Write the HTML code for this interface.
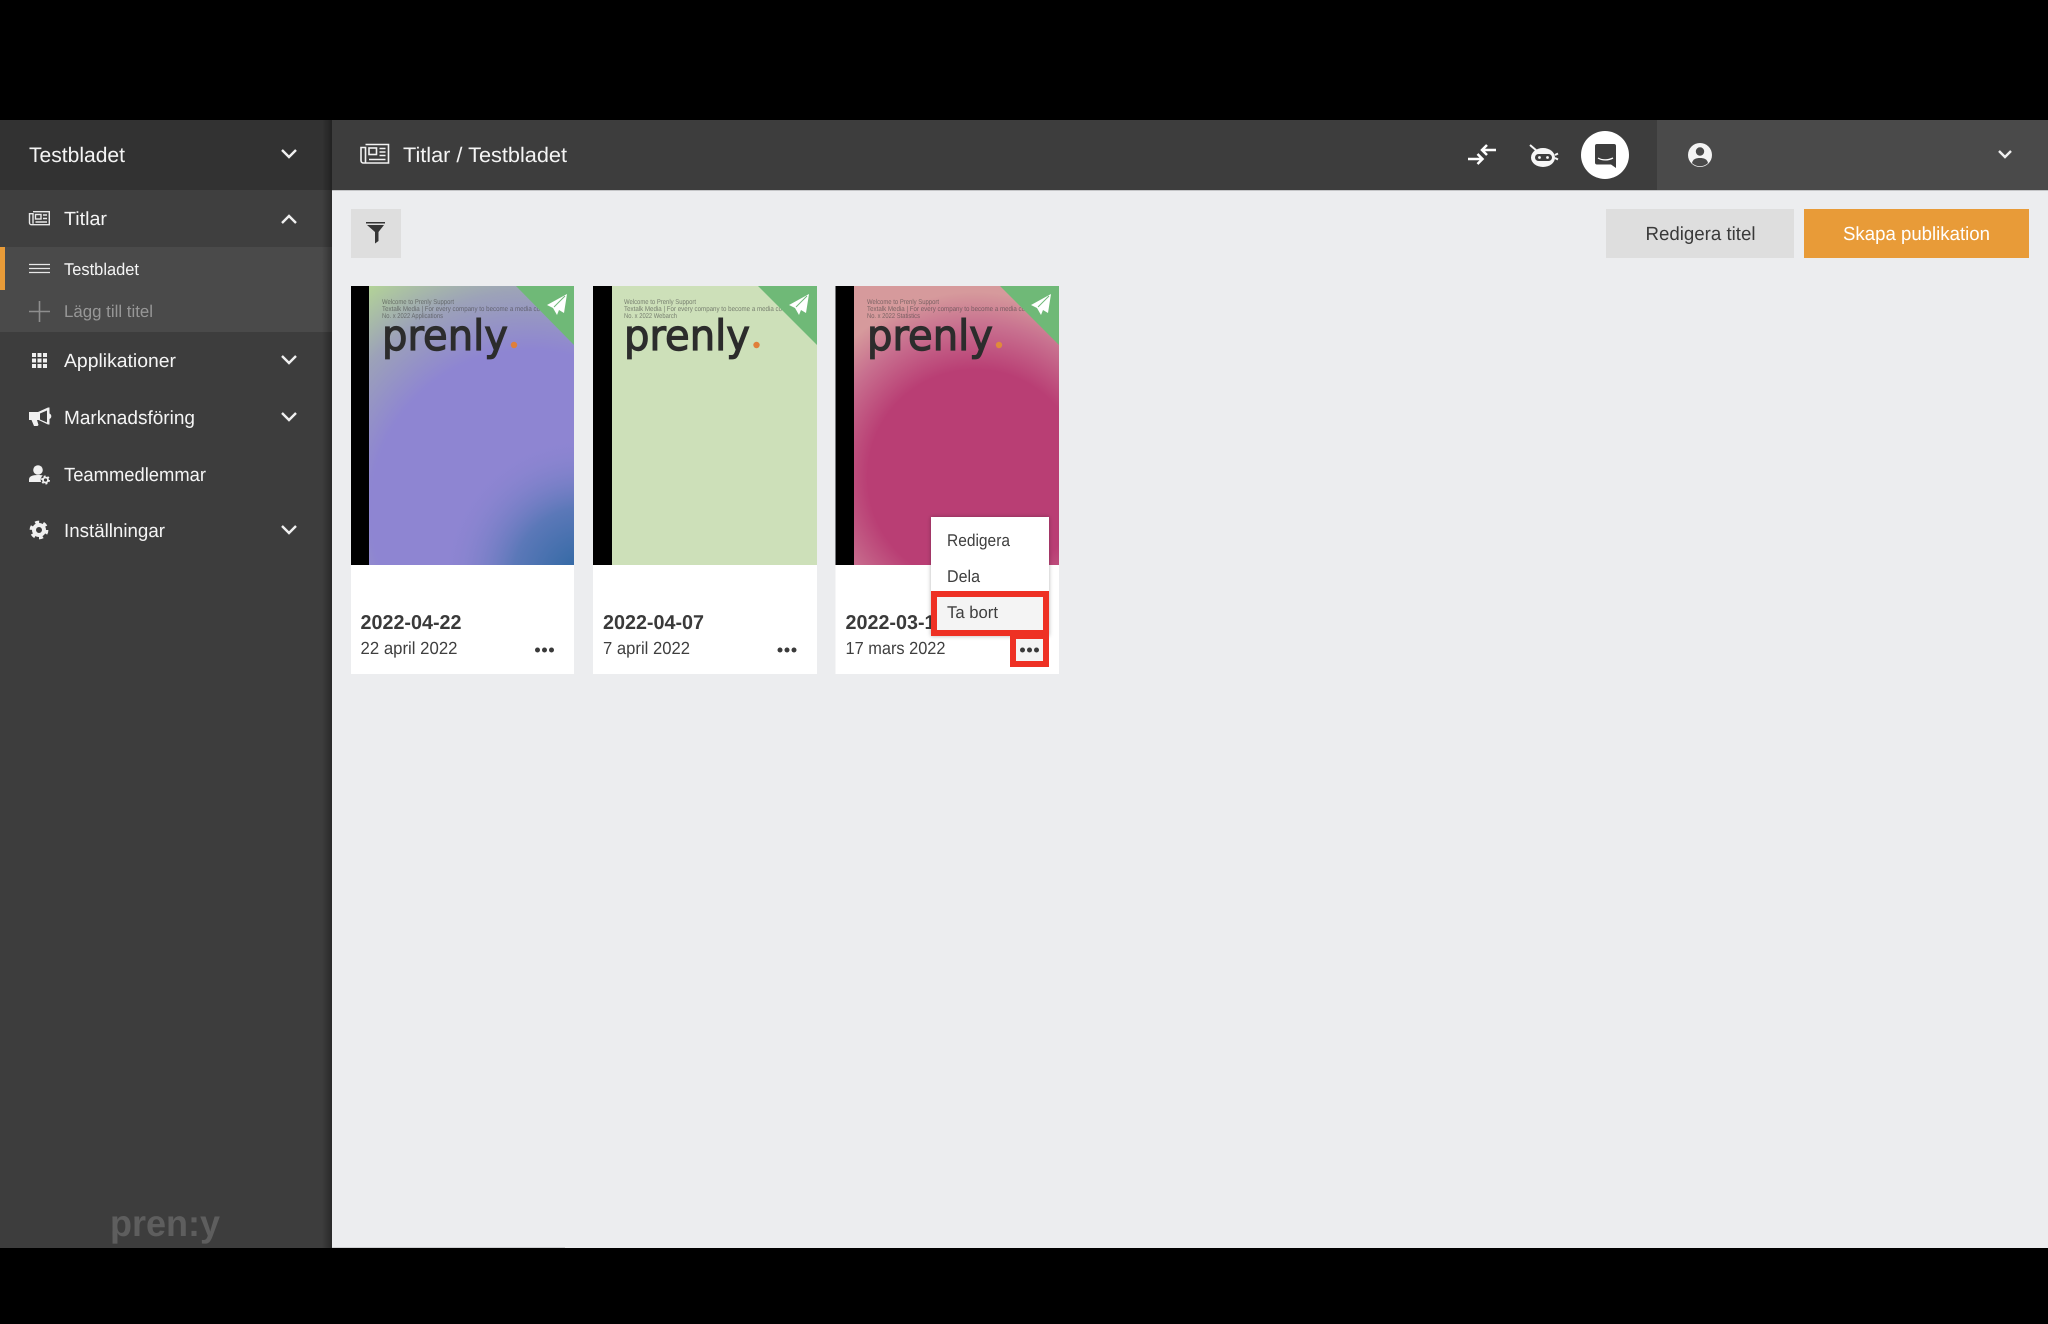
<!DOCTYPE html>
<html lang="sv">
<head>
<meta charset="utf-8">
<title>Titlar / Testbladet</title>
<style>
html,body{margin:0;padding:0;background:#000;width:2048px;height:1324px;overflow:hidden}
svg{display:block}
text{font-family:"Liberation Sans",sans-serif;text-rendering:geometricPrecision}
.w{fill:#f4f4f4}
.d{fill:#3c3c3c}
.sm{font-size:7px;fill:#3f3f3f;opacity:.62}
.lg{font-family:"DejaVu Sans",sans-serif;font-size:42px;fill:#2c2c2c;stroke:#2c2c2c;stroke-width:1.2}
.bd{font-size:20px;font-weight:bold;fill:#3a3a3a}
.sb{font-size:17.5px;fill:#3f3f3f}
.chev{fill:none;stroke:#f0f0f0;stroke-width:2.4}
</style>
</head>
<body>
<svg width="2048" height="1324" viewBox="0 0 2048 1324" xmlns="http://www.w3.org/2000/svg">
<defs>
<linearGradient id="edge" x1="0" x2="1" y1="0" y2="0"><stop offset="0" stop-color="#000" stop-opacity="0"/><stop offset="1" stop-color="#000" stop-opacity=".32"/></linearGradient>
<radialGradient id="g1" gradientUnits="userSpaceOnUse" cx="530" cy="510" r="280"><stop offset="0" stop-color="#8e85d2"/><stop offset=".57" stop-color="#8e85d2"/><stop offset=".78" stop-color="#9ca2b8"/><stop offset="1" stop-color="#b5d795"/></radialGradient>
<radialGradient id="b1" gradientUnits="userSpaceOnUse" cx="585" cy="580" r="145"><stop offset="0" stop-color="#2a66a0"/><stop offset=".5" stop-color="#5b78b8"/><stop offset="1" stop-color="#8e85d2" stop-opacity="0"/></radialGradient>
<radialGradient id="g3" gradientUnits="userSpaceOnUse" cx="975" cy="477" r="185"><stop offset="0" stop-color="#b93e74"/><stop offset=".58" stop-color="#b93e74"/><stop offset=".82" stop-color="#c8708f"/><stop offset="1" stop-color="#d69a9c"/></radialGradient>
<filter id="sh" x="-10%" y="-10%" width="120%" height="120%"><feDropShadow dx="0" dy="0" stdDeviation="2" flood-color="#000" flood-opacity=".3"/></filter>
<g id="plane"><path d="M20 0 L0 11 L6 14 L10 21 L12 16 L17 19 Z" fill="#fff"/><path d="M18 2 L7 13" stroke="#6fb977" stroke-width="1"/></g>
</defs>

<rect width="2048" height="1324" fill="#000"/>
<rect x="332" y="120" width="1716" height="1128" fill="#ecedef"/>

<!-- sidebar -->
<rect x="0" y="120" width="332" height="1128" fill="#3d3d3d"/>
<rect x="0" y="120" width="332" height="70" fill="#323232"/>
<rect x="0" y="190" width="332" height="57" fill="#3f3f3f"/>
<rect x="0" y="247" width="332" height="85" fill="#4a4a4a"/>
<rect x="0" y="247" width="5" height="43" fill="#e89b38"/>
<rect x="322" y="120" width="10" height="1128" fill="url(#edge)"/>

<text x="29" y="162" font-size="21" class="w" textLength="96" lengthAdjust="spacingAndGlyphs">Testbladet</text>
<path class="chev" d="M282 150l7 7 7-7"/>

<g fill="none" stroke="#e8e8e8" stroke-width="1.4">
<path d="M33 211.700h16.300v13H31.500a2 2 0 0 1-2-2v-9h3.500v10"/>
<rect x="35.500" y="214.500" width="5.500" height="4.500"/>
<path d="M43 215h4M43 218.500h4M35.500 222h11.500"/>
</g>
<text x="64" y="225" font-size="19" class="w" textLength="43" lengthAdjust="spacingAndGlyphs">Titlar</text>
<path class="chev" d="M282 223l7-7 7 7"/>

<path d="M29 264.500h21M29 268.500h21M29 272.500h21" stroke="#e8e8e8" stroke-width="1.300"/>
<text x="64" y="275" font-size="17" class="w" textLength="75" lengthAdjust="spacingAndGlyphs">Testbladet</text>

<path d="M39.500 301v21M29 311.500h21" stroke="#8e8e8e" stroke-width="1.600"/>
<text x="64" y="317" font-size="17" fill="#979797" textLength="89" lengthAdjust="spacingAndGlyphs">Lägg till titel</text>

<g fill="#f0f0f0">
<rect x="32" y="353" width="4" height="4"/><rect x="37.500" y="353" width="4" height="4"/><rect x="43" y="353" width="4" height="4"/>
<rect x="32" y="358.500" width="4" height="4"/><rect x="37.500" y="358.500" width="4" height="4"/><rect x="43" y="358.500" width="4" height="4"/>
<rect x="32" y="364" width="4" height="4"/><rect x="37.500" y="364" width="4" height="4"/><rect x="43" y="364" width="4" height="4"/>
</g>
<text x="64" y="367" font-size="19" class="w" textLength="112" lengthAdjust="spacingAndGlyphs">Applikationer</text>
<path class="chev" d="M282 356l7 7 7-7"/>

<path fill="#f0f0f0" fill-rule="evenodd" d="M29 412h9l10-4.500h1.500v6a3 3 0 0 1 0 5.500v5.500H48l-9.500-4.500h-1.500l1.500 5-1 1h-3.500l-2.500-6H29z M40 413.500v6l7 3v-12z"/>
<text x="64" y="424" font-size="19" class="w" textLength="131" lengthAdjust="spacingAndGlyphs">Marknadsföring</text>
<path class="chev" d="M282 413l7 7 7-7"/>

<circle cx="38" cy="470" r="4.800" fill="#f0f0f0"/>
<path d="M29 482v-2.500c0-3 3-4.500 9-4.500 2 0 3.600.2 4.800.5-2 1.500-2.600 4-1.600 6.500z" fill="#f0f0f0"/>
<circle cx="45.500" cy="480" r="2.500" fill="none" stroke="#f0f0f0" stroke-width="1.800"/>
<circle cx="45.500" cy="480" r="3.800" fill="none" stroke="#f0f0f0" stroke-width="1.400" stroke-dasharray="2 1.980"/>
<text x="64" y="481" font-size="19" class="w" textLength="142" lengthAdjust="spacingAndGlyphs">Teammedlemmar</text>

<circle cx="39" cy="530" r="5" fill="none" stroke="#f0f0f0" stroke-width="4"/>
<circle cx="39" cy="530" r="8" fill="none" stroke="#f0f0f0" stroke-width="2.800" stroke-dasharray="4.100 4.280"/>
<text x="64" y="537" font-size="19" class="w" textLength="101" lengthAdjust="spacingAndGlyphs">Inställningar</text>
<path class="chev" d="M282 526l7 7 7-7"/>

<text x="110" y="1236" font-size="37" font-weight="bold" fill="#5e5e5e" textLength="110" lengthAdjust="spacingAndGlyphs">pren:y</text>

<!-- header -->
<rect x="332" y="120" width="1325" height="70" fill="#3d3d3d"/>
<rect x="1657" y="120" width="391" height="70" fill="#4a4a4a"/>
<rect x="332" y="190" width="1716" height="1" fill="#c4c5c7"/>

<g fill="none" stroke="#f2f2f2" stroke-width="1.600">
<path d="M365.500 144.500h23v18.500h-25a2.500 2.500 0 0 1-2.500-2.500v-13h4.500v15"/>
<rect x="369" y="148" width="7.500" height="6.500"/>
<path d="M379.500 148.500h6M379.500 152h6M379.500 155.500h6M369 159.500h16.500"/>
</g>
<text x="403" y="162" font-size="21" class="w" textLength="164" lengthAdjust="spacingAndGlyphs">Titlar / Testbladet</text>

<path d="M1468 159h14M1477.500 154l5 5-5 5M1496 150h-14M1487 145l-5 5 5 5" fill="none" stroke="#fff" stroke-width="2.500"/>

<ellipse cx="1543" cy="157.500" rx="12" ry="9.500" fill="#f6f6f6"/>
<path d="M1530 145l7 6M1555 155l3-1.500M1555 158l3 1.500" stroke="#f6f6f6" stroke-width="2"/>
<rect x="1535" y="154" width="17" height="7" rx="3.500" fill="#3d3d3d"/>
<circle cx="1539.500" cy="157.500" r="1.400" fill="#f6f6f6"/><circle cx="1547.500" cy="157.500" r="1.400" fill="#f6f6f6"/>

<circle cx="1605" cy="155" r="24" fill="#fff"/>
<path d="M1597 144h17a2 2 0 0 1 2 2v22l-5-3.500h-14a2 2 0 0 1-2-2V146a2 2 0 0 1 2-2z" fill="#3d3d3d"/>
<path d="M1598 158c4 2.500 10 2.500 15 0" fill="none" stroke="#fff" stroke-width="1.300"/>

<circle cx="1700" cy="155" r="12" fill="#f4f4f4"/>
<circle cx="1700" cy="151.500" r="4.200" fill="#4a4a4a"/>
<path d="M1692 163c1-4 4-5 8-5s7 1 8 5c-2 2-5 3.200-8 3.200s-6-1.200-8-3.200z" fill="#4a4a4a"/>
<path class="chev" d="M1999 151l6 6 6-6"/>

<!-- toolbar -->
<rect x="351" y="209" width="50" height="49" fill="#dedede"/>
<path d="M366 222h19v1.500h-19zM367 225h17l-5.500 7v9l-3.500 2.500V232z" fill="#353535"/>
<rect x="1606" y="209" width="188" height="49" fill="#dedede"/>
<text x="1645.500" y="240" font-size="19" fill="#3a3a3a" textLength="110" lengthAdjust="spacingAndGlyphs">Redigera titel</text>
<rect x="1804" y="209" width="225" height="49" fill="#e89b38"/>
<text x="1843" y="240" font-size="19" fill="#fff" textLength="147" lengthAdjust="spacingAndGlyphs">Skapa publikation</text>

<!-- card 1 -->
<rect x="351" y="286" width="223" height="388" fill="#fff"/>
<rect x="351" y="286" width="18" height="279" fill="#000"/>
<rect x="369" y="286" width="205" height="279" fill="url(#g1)"/>
<rect x="369" y="286" width="205" height="279" fill="url(#b1)"/>
<text class="sm" x="382" y="304" textLength="72" lengthAdjust="spacingAndGlyphs">Welcome to Prenly Support</text>
<text class="sm" x="382" y="311" textLength="158" lengthAdjust="spacingAndGlyphs">Textalk Media | For every company to become a media co</text>
<text class="sm" x="382" y="318" textLength="61" lengthAdjust="spacingAndGlyphs">No. x 2022 Applications</text>
<text class="lg" x="382" y="350" textLength="126" lengthAdjust="spacingAndGlyphs">prenly</text>
<circle cx="514" cy="345" r="3.200" fill="#e07f3a"/>
<path d="M516 286h58v59z" fill="#6fb977"/>
<use href="#plane" x="547" y="294"/>
<text class="bd" x="360.500" y="629" textLength="101" lengthAdjust="spacingAndGlyphs">2022-04-22</text>
<text class="sb" x="360.500" y="654" textLength="97" lengthAdjust="spacingAndGlyphs">22 april 2022</text>
<g fill="#3a3a3a"><circle cx="537.500" cy="650" r="2.500"/><circle cx="544.500" cy="650" r="2.500"/><circle cx="551.500" cy="650" r="2.500"/></g>

<!-- card 2 -->
<rect x="593" y="286" width="224" height="388" fill="#fff"/>
<rect x="593" y="286" width="19" height="279" fill="#000"/>
<rect x="612" y="286" width="205" height="279" fill="#cde0b9"/>
<text class="sm" x="624" y="304" textLength="72" lengthAdjust="spacingAndGlyphs">Welcome to Prenly Support</text>
<text class="sm" x="624" y="311" textLength="158" lengthAdjust="spacingAndGlyphs">Textalk Media | For every company to become a media co</text>
<text class="sm" x="624" y="318" textLength="53" lengthAdjust="spacingAndGlyphs">No. x 2022 Webarch</text>
<text class="lg" x="624" y="350" textLength="126" lengthAdjust="spacingAndGlyphs">prenly</text>
<circle cx="756.500" cy="345" r="3.200" fill="#e07f3a"/>
<path d="M758 286h59v59z" fill="#6fb977"/>
<use href="#plane" x="789" y="294"/>
<text class="bd" x="603" y="629" textLength="101" lengthAdjust="spacingAndGlyphs">2022-04-07</text>
<text class="sb" x="603" y="654" textLength="87" lengthAdjust="spacingAndGlyphs">7 april 2022</text>
<g fill="#3a3a3a"><circle cx="780" cy="650" r="2.500"/><circle cx="787" cy="650" r="2.500"/><circle cx="794" cy="650" r="2.500"/></g>

<!-- card 3 -->
<rect x="835.500" y="286" width="223.500" height="388" fill="#fff"/>
<rect x="835.500" y="286" width="18.500" height="279" fill="#000"/>
<rect x="854" y="286" width="205" height="279" fill="url(#g3)"/>
<text class="sm" x="867" y="304" textLength="72" lengthAdjust="spacingAndGlyphs">Welcome to Prenly Support</text>
<text class="sm" x="867" y="311" textLength="158" lengthAdjust="spacingAndGlyphs">Textalk Media | For every company to become a media co</text>
<text class="sm" x="867" y="318" textLength="53" lengthAdjust="spacingAndGlyphs">No. x 2022 Statistics</text>
<text class="lg" x="867" y="350" textLength="126" lengthAdjust="spacingAndGlyphs">prenly</text>
<circle cx="999" cy="345" r="3.200" fill="#e08a3a"/>
<path d="M1000 286h59v59z" fill="#6fb977"/>
<use href="#plane" x="1031" y="294"/>
<text class="bd" x="845.500" y="629" textLength="101" lengthAdjust="spacingAndGlyphs">2022-03-17</text>
<text class="sb" x="845.500" y="654" textLength="100" lengthAdjust="spacingAndGlyphs">17 mars 2022</text>

<!-- dropdown -->
<rect x="931" y="517" width="118" height="119" fill="#fff" filter="url(#sh)"/>
<text x="947" y="546" font-size="17" fill="#3f3f3f" textLength="63" lengthAdjust="spacingAndGlyphs">Redigera</text>
<text x="947" y="582" font-size="17" fill="#3f3f3f" textLength="33" lengthAdjust="spacingAndGlyphs">Dela</text>
<rect x="934" y="594" width="112" height="39" fill="#f4f4f4" stroke="#ee3124" stroke-width="6"/>
<text x="947" y="618" font-size="17" fill="#3f3f3f" textLength="51" lengthAdjust="spacingAndGlyphs">Ta bort</text>
<rect x="1013" y="636" width="33" height="28" fill="#f4f4f4" stroke="#ee3124" stroke-width="6"/>
<rect x="1010" y="633" width="39" height="3" fill="#ee3124"/>
<g fill="#3a3a3a"><circle cx="1022.500" cy="650" r="2.500"/><circle cx="1029.500" cy="650" r="2.500"/><circle cx="1036.500" cy="650" r="2.500"/></g>

<rect x="332" y="1247" width="233" height="1" fill="#cfd0d2"/>
</svg>
</body>
</html>
